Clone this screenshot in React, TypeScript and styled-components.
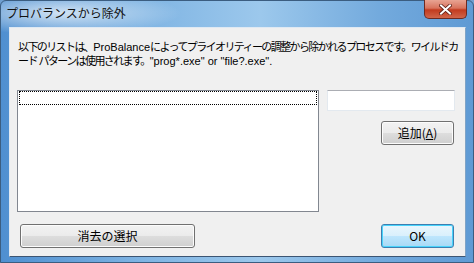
import React from 'react';
import styled, { createGlobalStyle } from 'styled-components';

const Global = createGlobalStyle`
  html, body { margin: 0; padding: 0; background: #6f9fd0; }
  body { font-family: "Noto Sans CJK JP", "Liberation Sans", sans-serif; }
`;

// Aero風のウィンドウ枠
const Frame = styled.div`
  width: 474px;
  height: 263px;
  box-sizing: border-box;
  display: flex;
  flex-direction: column;
  padding: 0 7px 5px 8px;
  background:
    radial-gradient(ellipse 120px 22px at 60px 12px, rgba(255,255,255,0.7), rgba(255,255,255,0) 100%),
    linear-gradient(90deg, #4f8fd0 0%, #7fb4e3 30%, #9cc8ec 55%, #73aadd 80%, #5f9ad4 100%);
  border: 1px solid #3b5d80;
  border-radius: 6px 6px 0 0;
`;

const TitleBar = styled.div`
  height: 26px;
  display: flex;
  align-items: flex-start;
  justify-content: space-between;
`;

const Title = styled.div`
  font-size: 12px;
  color: #111;
  padding-top: 4px;
  margin-left: -3px;
  line-height: 16px;
`;

const CloseBtn = styled.div`
  width: 43px;
  height: 19px;
  margin-right: -1px;
  margin-top: -1px;
  box-sizing: border-box;
  border: 1px solid #6d2a22;
  border-top: none;
  border-radius: 0 0 5px 5px;
  background: linear-gradient(180deg, #e8a493 0%, #d8735d 45%, #c23b1f 55%, #d0654a 100%);
  display: flex;
  align-items: center;
  justify-content: center;
`;

const Client = styled.div`
  flex: 1;
  background: #f0f0f0;
  border: 1px solid #dfe9f3;
  border-bottom-color: #3c5573;
  border-right-color: #7fa3c6;
  box-sizing: border-box;
  display: flex;
  flex-direction: column;
  padding: 0 10px 0 7px;
`;

const Description = styled.p`
  margin: 12px 0 0 1px;
  font-size: 11px;
  letter-spacing: -1.6px;
  line-height: 13px;
  color: #000;
  white-space: nowrap;
`;

// 英数字部分は詰めない
const Latin = styled.span`
  font-family: "Liberation Sans", sans-serif;
  letter-spacing: 0;
`;

const Middle = styled.div`
  display: flex;
  gap: 8px;
  margin-top: 22px;
`;

const ListBox = styled.div`
  width: 306px;
  height: 122px;
  box-sizing: border-box;
  background: #fff;
  border: 1px solid #828790;
  padding: 0 1px;
`;

const FocusRow = styled.div`
  height: 14px;
  box-sizing: border-box;
  border: 1px dotted #000;
`;

const Side = styled.div`
  width: 128px;
  display: flex;
  flex-direction: column;
  align-items: flex-end;
`;

const TextInput = styled.input`
  width: 128px;
  height: 21px;
  box-sizing: border-box;
  border: 1px solid #e3e9ef;
  border-top-color: #abadb3;
  background: #fff;
  outline: none;
`;

const Button = styled.button<{ $def?: boolean; $w: number }>`
  width: ${p => p.$w}px;
  height: 24px;
  box-sizing: border-box;
  border-radius: 3px;
  border: 1px solid ${p => (p.$def ? '#3c7fb1' : '#707070')};
  background: ${p =>
    p.$def
      ? 'linear-gradient(180deg, #eaf6fd 0%, #d9f0fc 50%, #bee6fd 51%, #a7d9f5 100%)'
      : 'linear-gradient(180deg, #f2f2f2 0%, #ebebeb 50%, #dddddd 51%, #cfcfcf 100%)'};
  box-shadow: inset 0 0 0 1px ${p => (p.$def ? '#48d3fb' : '#fcfcfc')};
  font-family: "Noto Sans CJK JP", "Liberation Sans", sans-serif;
  font-size: 12px;
  color: #000;
  padding: 0;
  line-height: 20px;
`;

const AddButton = styled(Button)`
  margin-top: 10px;
  margin-right: 1px;
`;

const Bottom = styled.div`
  display: flex;
  justify-content: space-between;
  margin-top: 12px;
  padding: 0 1px 0 3px;
`;

const Key = styled.span`
  text-decoration: underline;
`;

export default function App() {
  return (
    <>
      <Global />
      <Frame>
        <TitleBar>
          <Title>プロバランスから除外</Title>
          <CloseBtn>
            <svg width="13" height="11" viewBox="0 0 13 11">
              <path d="M2 1.5 L11 9.5 M11 1.5 L2 9.5" stroke="#5a1c14" strokeWidth="3.6" strokeLinecap="square" />
              <path d="M2 1.5 L11 9.5 M11 1.5 L2 9.5" stroke="#fff" strokeWidth="2" strokeLinecap="square" />
            </svg>
          </CloseBtn>
        </TitleBar>
        <Client>
          <Description>
            以下のリストは、<Latin>ProBalance</Latin>によってプライオリティーの調整から除かれるプロセスです。ワイルドカ
            <br />
            ード&nbsp;&nbsp;パターンは使用されます。<Latin>"prog*.exe" or "file?.exe".</Latin>
          </Description>
          <Middle>
            <ListBox>
              <FocusRow />
            </ListBox>
            <Side>
              <TextInput />
              <AddButton $w={73}>
                追加(<Key>A</Key>)
              </AddButton>
            </Side>
          </Middle>
          <Bottom>
            <Button $w={175}>消去の選択</Button>
            <Button $w={73} $def>
              OK
            </Button>
          </Bottom>
        </Client>
      </Frame>
    </>
  );
}
